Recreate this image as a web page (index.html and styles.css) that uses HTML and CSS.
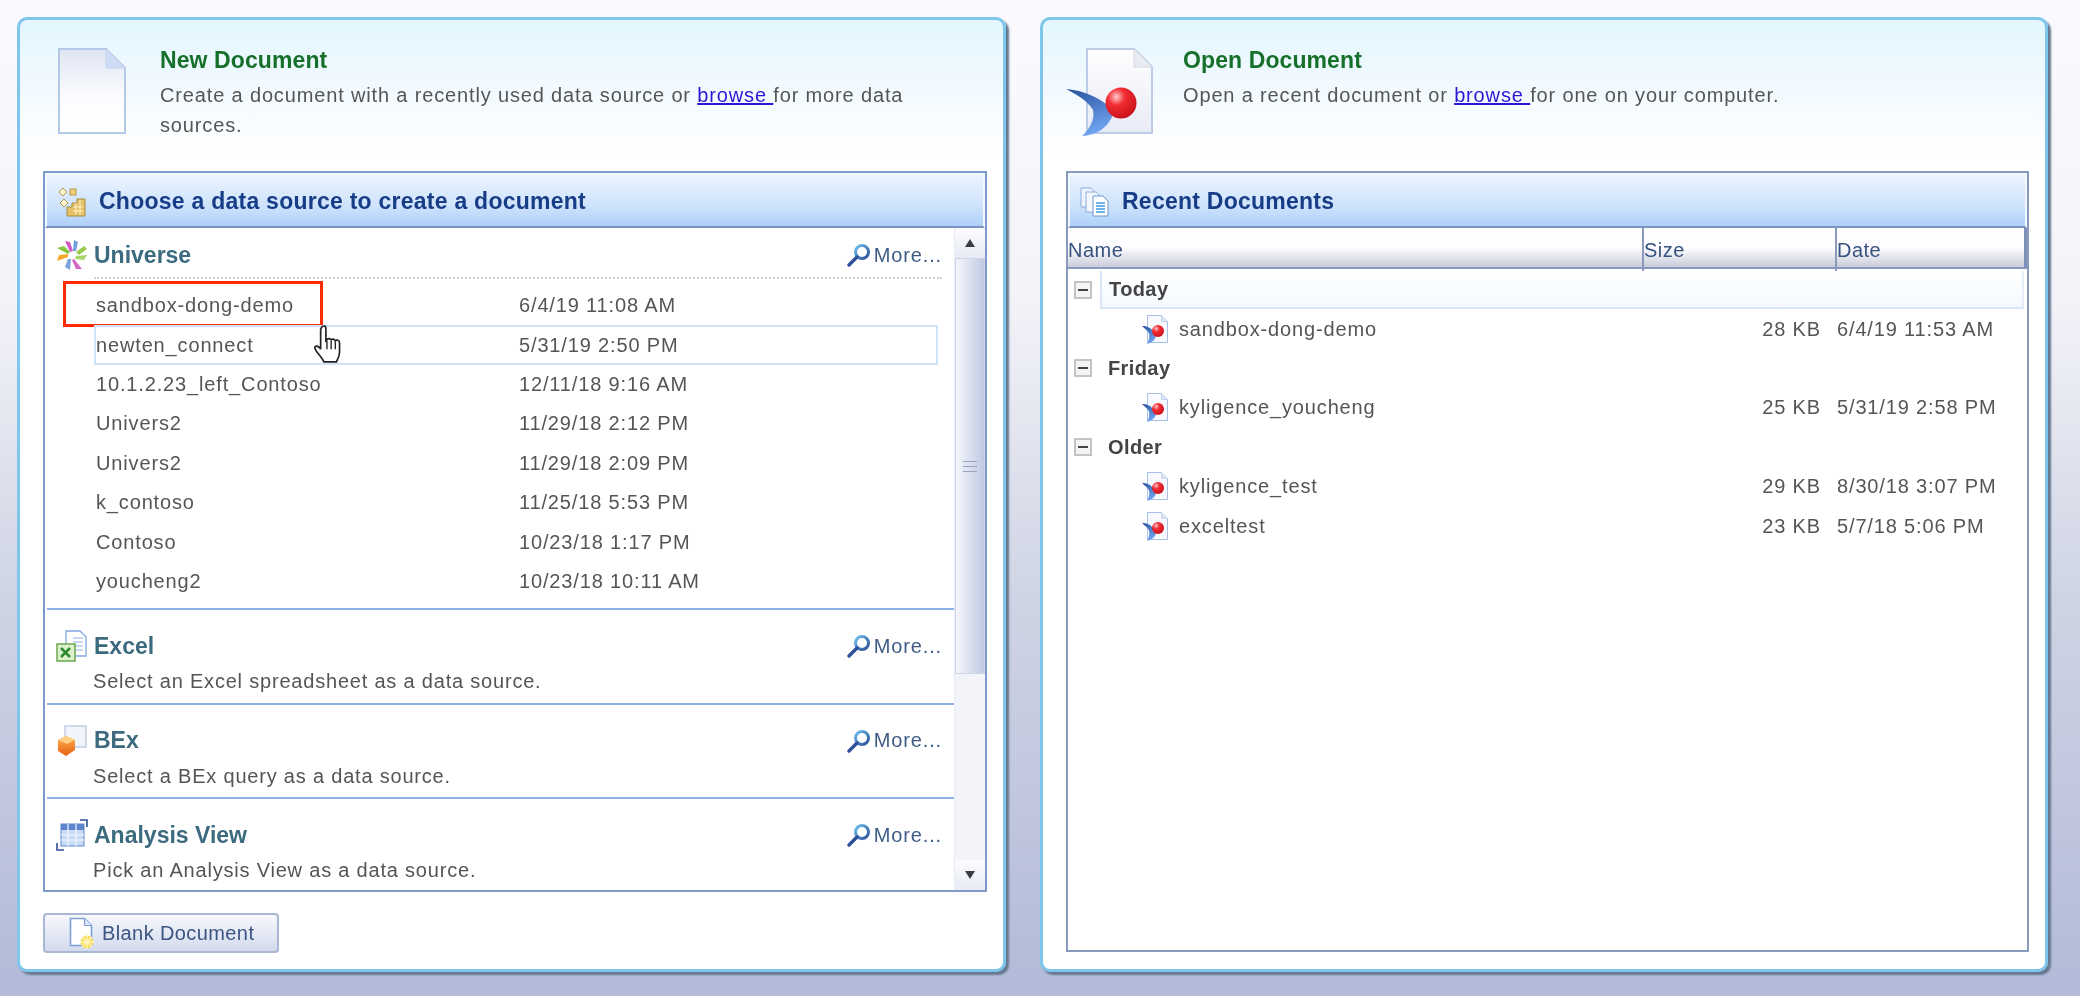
FILE: index.html
```html
<!DOCTYPE html>
<html lang="en">
<head>
    <meta charset="UTF-8">
    <title>Web Intelligence</title>
    <link rel="stylesheet" href="styles.css">
</head>
<body>
    <!-- Panel 1: new document -->
    <section class="panel panel-new">
        <div class="intro">
            <svg class="intro-icon" viewBox="0 0 68 86"><use href="#i-blank-page"/></svg>
            <div class="intro-text">
                <h2>New Document</h2>
                <p>Create a document with a recently used data source or <a href="#">browse </a>for more data<br>sources.</p>
            </div>
        </div>

        <div class="box box-sources">
            <h3 class="box-title">
                <svg class="title-icon" viewBox="0 0 30 30"><use href="#i-source"/></svg>
                Choose a data source to create a document
            </h3>
            <div class="sources">
                <div class="source-list">
                    <div class="source source-universe">
                        <div class="source-head">
                            <svg class="source-icon" viewBox="0 0 32 32"><use href="#i-universe"/></svg>
                            <h4>Universe</h4>
                            <span class="more"><svg viewBox="0 0 24 24"><use href="#i-lens"/></svg>More...</span>
                        </div>
                        <div class="rows">
                            <div class="row"><span>sandbox-dong-demo</span><span>6/4/19 11:08 AM</span><i class="callout"></i></div>
                            <div class="row row-hover"><span>newten_connect</span><span>5/31/19 2:50 PM</span>
                                <svg class="hand" viewBox="0 0 30 40"><path d="M9 3c2-2 4-1 4 1v12l1-1c1-2 3-1 4 0 1-1 3-1 4 1 1-1 4-1 4 2v9c0 4-2 7-3 9H11c-1-3-4-6-7-10-2-3-2-5 0-5 1 0 3 1 4 3V5z" fill="#fff" stroke="#222" stroke-width="1.6"/><path d="M14 16v8M18 16v8M22 17v7" stroke="#222" stroke-width="1.3" fill="none"/></svg>
                            </div>
                            <div class="row"><span>10.1.2.23_left_Contoso</span><span>12/11/18 9:16 AM</span></div>
                            <div class="row"><span>Univers2</span><span>11/29/18 2:12 PM</span></div>
                            <div class="row"><span>Univers2</span><span>11/29/18 2:09 PM</span></div>
                            <div class="row"><span>k_contoso</span><span>11/25/18 5:53 PM</span></div>
                            <div class="row"><span>Contoso</span><span>10/23/18 1:17 PM</span></div>
                            <div class="row"><span>youcheng2</span><span>10/23/18 10:11 AM</span></div>
                        </div>
                    </div>
                    <div class="source">
                        <div class="source-head">
                            <svg class="source-icon" viewBox="0 0 32 32"><use href="#i-excel"/></svg>
                            <h4>Excel</h4>
                            <span class="more"><svg viewBox="0 0 24 24"><use href="#i-lens"/></svg>More...</span>
                        </div>
                        <p>Select an Excel spreadsheet as a data source.</p>
                    </div>
                    <div class="source">
                        <div class="source-head">
                            <svg class="source-icon" viewBox="0 0 32 32"><use href="#i-bex"/></svg>
                            <h4>BEx</h4>
                            <span class="more"><svg viewBox="0 0 24 24"><use href="#i-lens"/></svg>More...</span>
                        </div>
                        <p>Select a BEx query as a data source.</p>
                    </div>
                    <div class="source source-last">
                        <div class="source-head">
                            <svg class="source-icon" viewBox="0 0 32 32"><use href="#i-analysis"/></svg>
                            <h4>Analysis View</h4>
                            <span class="more"><svg viewBox="0 0 24 24"><use href="#i-lens"/></svg>More...</span>
                        </div>
                        <p>Pick an Analysis View as a data source.</p>
                    </div>
                </div>
                <div class="scrollbar">
                    <div class="scroll-btn"><b class="arrow-up"></b></div>
                    <div class="scroll-thumb"><b></b></div>
                    <div class="scroll-track"></div>
                    <div class="scroll-btn"><b class="arrow-down"></b></div>
                </div>
            </div>
        </div>

        <button class="blank">
            <svg viewBox="0 0 26 32"><path d="M1.5 1.5h14l7 7v20h-21z" fill="#fff" stroke="#7f9fd6" stroke-width="1.6"/><path d="M15.500 1.500v7h7" fill="#dfe9f8" stroke="#7f9fd6" stroke-width="1.200"/><circle cx="18" cy="25" r="6.500" fill="#f8dc5c"/><path d="M18 18v14M11 25h14M13 20l10 10M23 20l-10 10" stroke="#fff5bf" stroke-width="1.300"/></svg>
            Blank Document
        </button>
    </section>

    <!-- Panel 2: open document -->
    <section class="panel panel-open">
        <div class="intro">
            <svg class="intro-icon" viewBox="0 0 90 90"><use href="#i-report"/></svg>
            <div class="intro-text">
                <h2>Open Document</h2>
                <p>Open a recent document or <a href="#">browse </a>for one on your computer.</p>
            </div>
        </div>

        <div class="box box-recent">
            <h3 class="box-title">
                <svg class="title-icon" viewBox="0 0 30 30"><use href="#i-recent"/></svg>
                Recent Documents
            </h3>
            <div class="cols">
                <span>Name</span><span>Size</span><span>Date</span>
            </div>
            <div class="group group-active"><b class="toggle"></b><strong>Today</strong></div>
            <div class="doc"><svg viewBox="0 0 26 29"><use href="#i-report-small"/></svg><span class="doc-name">sandbox-dong-demo</span><span class="doc-size">28 KB</span><span>6/4/19 11:53 AM</span></div>
            <div class="group"><b class="toggle"></b><strong>Friday</strong></div>
            <div class="doc"><svg viewBox="0 0 26 29"><use href="#i-report-small"/></svg><span class="doc-name">kyligence_youcheng</span><span class="doc-size">25 KB</span><span>5/31/19 2:58 PM</span></div>
            <div class="group"><b class="toggle"></b><strong>Older</strong></div>
            <div class="doc"><svg viewBox="0 0 26 29"><use href="#i-report-small"/></svg><span class="doc-name">kyligence_test</span><span class="doc-size">29 KB</span><span>8/30/18 3:07 PM</span></div>
            <div class="doc"><svg viewBox="0 0 26 29"><use href="#i-report-small"/></svg><span class="doc-name">exceltest</span><span class="doc-size">23 KB</span><span>5/7/18 5:06 PM</span></div>
        </div>
    </section>

    <!-- Iconos compartidos -->
    <svg class="icon-defs" aria-hidden="true">
        <defs>
            <linearGradient id="g-page" x1="0" y1="0" x2="0" y2="1"><stop offset="0" stop-color="#dfe5f3"/><stop offset=".55" stop-color="#fbfcff"/><stop offset="1" stop-color="#fff"/></linearGradient>
            <linearGradient id="g-page2" x1="0" y1="0" x2="0" y2="1"><stop offset="0" stop-color="#fff"/><stop offset="1" stop-color="#e8ebf6"/></linearGradient>
            <radialGradient id="g-ball" cx=".35" cy=".3" r=".8"><stop offset="0" stop-color="#ffc9c9"/><stop offset=".35" stop-color="#f22c33"/><stop offset="1" stop-color="#c40d16"/></radialGradient>
            <linearGradient id="g-swoosh" x1="0" y1="0" x2=".4" y2="1"><stop offset="0" stop-color="#27519b"/><stop offset="1" stop-color="#6fa2f0"/></linearGradient>
            <linearGradient id="g-lens" x1="0" y1="0" x2="1" y2="1"><stop offset="0" stop-color="#6fc0ee"/><stop offset="1" stop-color="#2c4f9a"/></linearGradient>
            <linearGradient id="g-cube" x1="0" y1="0" x2="0" y2="1"><stop offset="0" stop-color="#ffb451"/><stop offset="1" stop-color="#e75f16"/></linearGradient>

            <symbol id="i-blank-page" viewBox="0 0 68 86">
                <path d="M1 1h47l19 19v65H1z" fill="url(#g-page)" stroke="#b4c8e8" stroke-width="2"/>
                <path d="M48 1v19h19z" fill="#cfdcf6" stroke="#c3d3ee"/>
            </symbol>
            <symbol id="i-report" viewBox="0 0 90 90">
                <path d="M21 2h47l18 18v66H21z" fill="url(#g-page2)" stroke="#bccbe6" stroke-width="2"/>
                <path d="M68 2v18h18z" fill="#e8ebf2" stroke="#d3d8e4"/>
                <path d="M0 42c16 1 32 8 41 16 3 4 5 8 5 12-6 12-16 18-30 19 8-7 13-17 11-26C22 54 10 47 0 42z" fill="url(#g-swoosh)"/>
                <circle cx="55" cy="56" r="15.500" fill="url(#g-ball)"/>
            </symbol>
            <symbol id="i-report-small" viewBox="0 0 26 29">
                <path d="M5.500.5h14l6 6v21h-20z" fill="#f8faff" stroke="#a9c0e6"/>
                <path d="M19.500.5v6h6z" fill="#dfe8f6" stroke="#c3d3ee"/>
                <path d="M0 11c5 0 9 2 11 5l3 6c-2 4-5 6-9 7 2-4 3-7 2-11-2-3-5-5-7-7z" fill="url(#g-swoosh)"/>
                <circle cx="16" cy="16" r="6" fill="url(#g-ball)"/>
            </symbol>
            <symbol id="i-source" viewBox="0 0 30 30">
                <path d="M7 1l4 4-4 4-4-4z" fill="#fff6d2" stroke="#b3954a"/>
                <rect x="14" y="2" width="6" height="6" fill="#f0cf74" stroke="#b3954a"/>
                <path d="M8 12l4 4-4 4-4-4z" fill="#fff6d2" stroke="#b3954a"/>
                <path d="M11 20h5v-4h5v-4h8v17H11z" fill="#e5c268" stroke="#a98c3f"/>
                <path d="M17 24h10M17 20h10M20 16v12M24 13v15" stroke="#fff4c8"/>
            </symbol>
            <symbol id="i-recent" viewBox="0 0 30 30">
                <path d="M2 1h10l3 3v16H2z" fill="#eef4fd" stroke="#8cacd8"/>
                <path d="M7 5h10l3 3v17H7z" fill="#f4f8fe" stroke="#8cacd8"/>
                <path d="M14 9h10l5 5v15H14z" fill="#fff" stroke="#6f97cf"/>
                <path d="M17 16h9M17 19h9M17 22h9M17 25h9" stroke="#3f9be0" stroke-width="1.400"/>
            </symbol>
            <symbol id="i-universe" viewBox="0 0 32 32">
                <path d="M14 13L9 2l5 1 3 9z" fill="#cf5cc6"/>
                <path d="M17 12l1-11 4 2-2 9z" fill="#6f9fdc"/>
                <path d="M20 13l8-6 3 3-8 6z" fill="#97cc4e"/>
                <path d="M20 17l11-1-3 5-9-1z" fill="#a8d66c"/>
                <path d="M18 20l8 10-6 0-4-9z" fill="#d565c4"/>
                <path d="M15 20l-1 11-5-3 3-8z" fill="#7aa4dc"/>
                <path d="M12 18L1 22l2-6 9-1z" fill="#f4a92c"/>
                <path d="M12 15L1 9l7-2 6 6z" fill="#86c640"/>
            </symbol>
            <symbol id="i-excel" viewBox="0 0 32 32">
                <path d="M10 1h14l6 6v19H10z" fill="#fff" stroke="#7fa8e0" stroke-width="1.300"/>
                <path d="M17 8h10M17 12h10M17 16h10M17 20h10" stroke="#8db4e6" stroke-width="1.200"/>
                <rect x="1" y="14" width="18" height="17" fill="#dff0cd" stroke="#69a84f" stroke-width="1.500"/>
                <path d="M5 18l9 9M14 18l-9 9" stroke="#2d8a2f" stroke-width="2.500"/>
            </symbol>
            <symbol id="i-bex" viewBox="0 0 32 32">
                <rect x="9" y="1" width="21" height="21" fill="#f2f4fb" stroke="#c3cde4" stroke-width="1.500"/>
                <path d="M10 11l9 4v10l-9 6-8-5V15z" fill="url(#g-cube)"/>
                <path d="M2 15l9 4 8-4-9-4z" fill="#ffcf86"/>
            </symbol>
            <symbol id="i-analysis" viewBox="0 0 32 32">
                <rect x="5" y="5" width="23" height="22" fill="#c8dcf8" stroke="#5c85cc"/>
                <rect x="5" y="5" width="23" height="6" fill="#5c85cc"/>
                <path d="M5 16h23M5 21h23M12 5v22M20 5v22" stroke="#f5f9ff" stroke-width="1.200"/>
                <path d="M24 1h7v7M1 24v7h7" fill="none" stroke="#2f4f95" stroke-width="1.600"/>
            </symbol>
            <symbol id="i-lens" viewBox="0 0 24 24">
                <circle cx="15" cy="9" r="6.500" fill="#fff" stroke="url(#g-lens)" stroke-width="3"/>
                <path d="M10 14L2 22" stroke="#2f5098" stroke-width="3.400" stroke-linecap="round"/>
            </symbol>
        </defs>
    </svg>
</body>
</html>
```

FILE: styles.css
```css
body {
    margin: 0;
    height: 996px;
    overflow: hidden;
    box-sizing: border-box;
    padding: 17px 0 0 17px;
    display: flex;
    align-items: flex-start;
    background: linear-gradient(#fafafe 0%, #f3f3f9 30%, #cfd4e4 60%, #b3bad8 100%);
    color: #555555;
    font-family: "Liberation Sans", Arial, sans-serif;
    font-size: 20px;
    letter-spacing: .85px;
}

.icon-defs {
    width: 0;
    height: 0;
    flex: none;
}

/* Paneles */
.panel {
    height: 955px;
    box-sizing: border-box;
    border: 3px solid #7ec6ec;
    border-radius: 10px;
    background: linear-gradient(#e3f6fe 0, #f2faff 70px, #ffffff 135px);
    box-shadow: 3px 3px 2px #66788f;
    display: flex;
    flex-direction: column;
    padding: 0 16px 0 23px;
    filter: blur(.55px);
}

.panel-new {
    width: 989px;
    margin-right: 34px;
}

.panel-open {
    width: 1008px;
    padding-right: 16px;
}

.intro {
    height: 151px;
    flex: none;
    box-sizing: border-box;
    display: flex;
}

.intro-icon {
    flex: none;
    width: 68px;
    height: 86px;
    margin: 28px 0 0 15px;
}

.panel-open .intro-icon {
    width: 90px;
    height: 90px;
    margin: 27px 0 0 0;
}

.intro-text {
    margin: 27px 0 0 34px;
}

.panel-open .intro-text {
    margin-left: 27px;
}

.intro-text h2 {
    margin: 0;
    font-size: 23px;
    line-height: 26px;
    color: #16702a;
    letter-spacing: .1px;
}

.intro-text p {
    margin: 7px 0 0;
    line-height: 30px;
    max-width: 780px;
}

.intro-text a {
    color: #2a18d8;
}

/* Cajas */
.box {
    border: 2px solid #7c9aca;
    box-sizing: border-box;
    background: #ffffff;
}

.box-sources {
    height: 721px;
    display: flex;
    flex-direction: column;
}

.box-recent {
    height: 781px;
    border-color: #8a9abc;
}

.box-title {
    margin: 0;
    height: 55px;
    flex: none;
    box-sizing: border-box;
    display: flex;
    align-items: center;
    gap: 13px;
    padding: 2px 0 0 9px;
    border: 2px solid #f2f8ff;
    border-bottom-color: #7c93bd;
    background: linear-gradient(#eaf4ff, #cfe3fc 60%, #aed0fa);
    font-size: 23px;
    color: #163d86;
    letter-spacing: .25px;
}

.title-icon {
    width: 30px;
    height: 30px;
}

/* Lista de fuentes */
.sources {
    flex: 1;
    display: flex;
    min-height: 0;
}

.source-list {
    flex: 1;
    padding-left: 2px;
}

.source {
    height: 94.5px;
    box-sizing: border-box;
    border-bottom: 2px solid #8fb2e6;
    padding-left: 9px;
}

.source-last {
    border-bottom: none;
}

.source-universe {
    height: 382px;
    padding-top: 11px;
}

.source-head {
    display: flex;
    align-items: center;
    height: 32px;
    padding-right: 12px;
}

.source:not(.source-universe) .source-head {
    padding-top: 20px;
}

.source-icon {
    width: 32px;
    height: 32px;
    flex: none;
    margin-right: 6px;
}

.source-head h4 {
    margin: 0;
    font-size: 23px;
    color: #3c6a7e;
    letter-spacing: 0;
}

.more {
    margin-left: auto;
    display: flex;
    align-items: center;
    gap: 3px;
    color: #3f5c86;
}

.more svg {
    width: 24px;
    height: 24px;
}

.source p {
    margin: 7px 0 0 37px;
    line-height: 24px;
    letter-spacing: .8px;
}

.rows {
    margin: 6px 12px 0 38px;
    padding-top: 7px;
    border-top: 2px dotted #d0d0d0;
}

.row {
    height: 39.4px;
    box-sizing: border-box;
    position: relative;
    display: flex;
    align-items: center;
    padding-left: 2px;
}

.row span:first-child {
    width: 423px;
}

.row-hover {
    border: 2px solid #cfe2f6;
    padding-left: 0;
    margin-right: 4px;
}

.callout {
    position: absolute;
    left: -31px;
    top: -5px;
    width: 260px;
    height: 46px;
    box-sizing: border-box;
    border: 3px solid #ff2a00;
}

.hand {
    position: absolute;
    left: 216px;
    top: -3px;
    width: 32px;
    height: 42px;
}

/* Barra de desplazamiento */
.scrollbar {
    width: 30px;
    flex: none;
    display: flex;
    flex-direction: column;
    background: #f3f4fa;
    border-left: 1px solid #e8ebf5;
}

.scroll-btn {
    height: 30px;
    flex: none;
    display: flex;
    align-items: center;
    justify-content: center;
    background: linear-gradient(#fbfcff, #e8ebf5);
}

.arrow-up, .arrow-down {
    border-left: 5px solid transparent;
    border-right: 5px solid transparent;
}

.arrow-up {
    border-bottom: 8px solid #3c3c44;
}

.arrow-down {
    border-top: 8px solid #3c3c44;
}

.scroll-thumb {
    height: 416px;
    flex: none;
    display: flex;
    align-items: center;
    justify-content: center;
    box-sizing: border-box;
    border: 1px solid #ccd4e6;
    background: linear-gradient(90deg, #f4f6fc, #c0c9e0);
}

.scroll-thumb b {
    width: 14px;
    height: 9px;
    border-top: 1px solid #98a3bf;
    border-bottom: 1px solid #98a3bf;
    background: linear-gradient(#98a3bf, #98a3bf) center / 100% 1px no-repeat;
}

.scroll-track {
    flex: 1;
}

/* Boton */
.blank {
    margin-top: 21px;
    width: 236px;
    height: 40px;
    flex: none;
    display: flex;
    align-items: center;
    gap: 7px;
    padding: 0 0 0 24px;
    border: 2px solid #a9b7d4;
    border-radius: 4px;
    background: linear-gradient(#f6f8fd, #d3daec);
    color: #3a5482;
    font-family: inherit;
    font-size: 20px;
    letter-spacing: .4px;
}

.blank svg {
    width: 26px;
    height: 32px;
}

/* Tabla de documentos */
.cols {
    height: 41px;
    box-sizing: border-box;
    display: grid;
    grid-template-columns: 574px 193px 1fr;
    border-bottom: 2px solid #8a9abc;
    border-right: 3px solid #7c90b8;
    margin-bottom: 1px;
    background: linear-gradient(#fefdff 0, #fefdff 50%, #c9cdda 100%);
    color: #35527f;
    letter-spacing: .5px;
}

.cols span {
    line-height: 44px;
}

.cols span + span {
    border-left: 2px solid #8a9abc;
}

.group {
    height: 39.4px;
    box-sizing: border-box;
    display: flex;
    align-items: center;
    padding-left: 6px;
}

.toggle {
    width: 18px;
    height: 18px;
    flex: none;
    box-sizing: border-box;
    border: 2px solid #c4c4c4;
    background: linear-gradient(#444, #444) center / 10px 2px no-repeat, #f4f4f4;
}

.group strong {
    margin-left: 16px;
    color: #444444;
    letter-spacing: .4px;
}

.group-active strong {
    border: 2px solid #d8e6f8;
    border-right-color: #e6eefa;
    border-top: none;
    background: linear-gradient(#ffffff, #f4f9ff);
    flex: 1;
    margin-right: 3px;
    margin-left: 8px;
    padding-left: 7px;
    line-height: 36px;
}

.doc {
    height: 39.4px;
    display: grid;
    grid-template-columns: 26px 1fr 74px 193px;
    align-items: center;
    column-gap: 0;
    padding-left: 74px;
}

.doc svg {
    width: 26px;
    height: 29px;
}

.doc-name {
    padding-left: 11px;
}

.doc-size {
    text-align: right;
    white-space: nowrap;
    padding-right: 13px;
}

.doc span:last-child {
    padding-left: 3px;
    white-space: nowrap;
}
```
